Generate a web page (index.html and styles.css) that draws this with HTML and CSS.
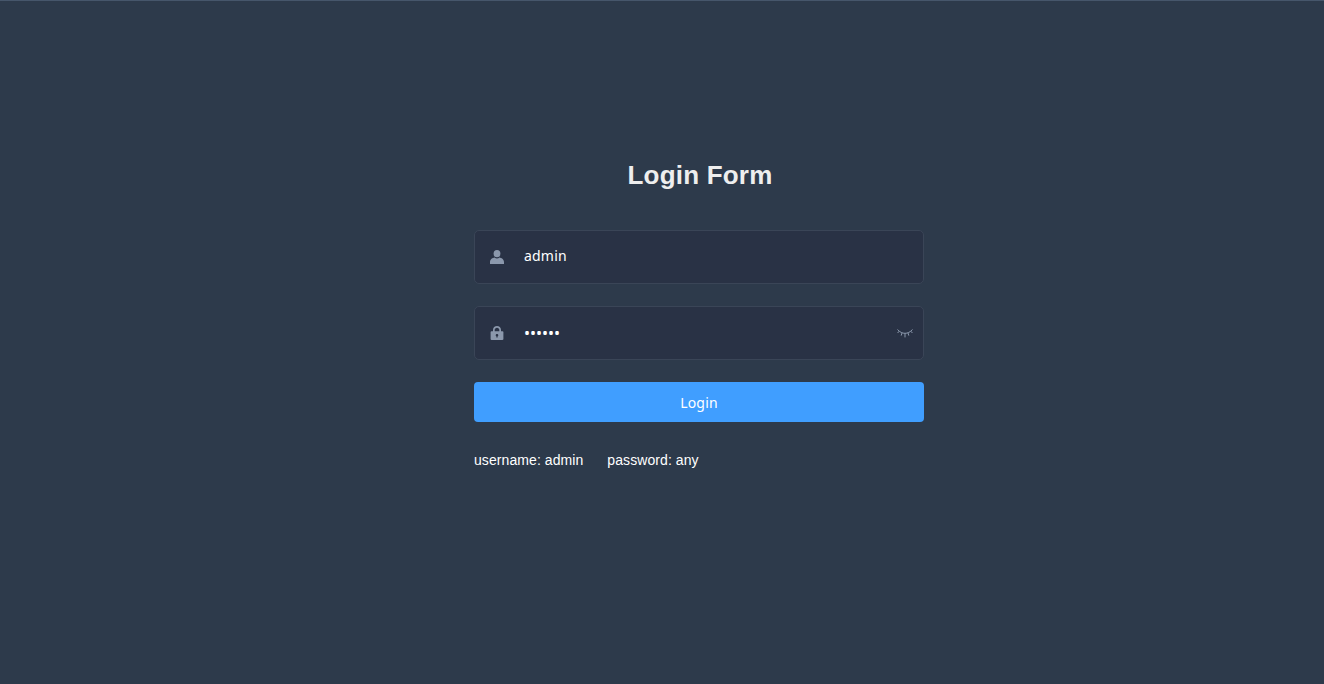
FILE: index.html
```html
<!DOCTYPE html>
<html lang="en">
<head>
    <meta charset="UTF-8">
    <meta name="viewport" content="width=device-width, initial-scale=1.0">
    <title>Login Form</title>
    <link rel="stylesheet" href="styles.css">
</head>
<body>
    <div class="login-container">
        <form class="login-form">
            <h3 class="title">Login Form</h3>

            <div class="form-item">
                <span class="svg-container">
                    <svg class="icon" viewBox="0 0 14 14">
                        <ellipse cx="7" cy="3.6" rx="3.4" ry="3.6" fill="currentColor"/>
                        <path d="M0 14v-1.8C0 9.4 2.6 7.8 4.6 7.6 5.3 8.2 6.1 8.5 7 8.5s1.7-.3 2.4-.9c2 .2 4.6 1.8 4.6 4.6V14z" fill="currentColor"/>
                    </svg>
                </span>
                <input class="form-input form-input-text" type="text" value="admin" aria-label="Username">
            </div>

            <div class="form-item">
                <span class="svg-container">
                    <svg class="icon" viewBox="0 0 14 14">
                        <path fill-rule="evenodd" fill="currentColor" d="M1.5 5.2H3V3.9C3 1.7 4.8 0 7 0s4 1.7 4 3.9v1.3h1.5c.5 0 .9.4.9.9v7c0 .5-.4.9-.9.9h-11c-.5 0-.9-.4-.9-.9v-7c0-.5.4-.9.9-.9zM4.7 5.2h4.6V3.9C9.300 2.700 8.300 1.700 7 1.700S4.700 2.700 4.700 3.900zM7 8c-.7 0-1.300.5-1.300 1.200 0 .5.300.9.700 1.100v1.300h1.200v-1.300c.4-.2.700-.6.700-1.100C8.300 8.500 7.700 8 7 8z"/>
                    </svg>
                </span>
                <input class="form-input form-input-pwd" type="password" value="123456" aria-label="Password">
                <span class="show-pwd">
                    <svg class="eye-icon" viewBox="0 0 16 10">
                        <path d="M.5 1.500C3 4.300 5.400 5.300 8 5.300s5-1 7.500-3.800" fill="none" stroke="currentColor" stroke-width="1"/>
                        <path d="M2.200 3.200.6 5M5 4.900 4.200 7.600M8 5.300V9.400M11 4.900 11.800 7.600M13.800 3.200 15.400 5" fill="none" stroke="currentColor" stroke-width="1"/>
                    </svg>
                </span>
            </div>

            <button class="login-button" type="button">Login</button>

            <div class="tips">
                <span class="tip">username: admin</span>
                <span>password: any</span>
            </div>
        </form>
    </div>
</body>
</html>
```

FILE: styles.css
```css
html, body {
    height: 100%;
    margin: 0;
}

body {
    box-sizing: border-box;
    background-color: #2d3a4b;
    border-top: 1px solid #46566b;
    overflow: hidden;
    font-family: "Liberation Sans", Arial, sans-serif;
}

.login-container {
    display: flex;
    justify-content: center;
    padding-left: 74px;
}

.login-form {
    width: 450px;
    padding-top: 159px;
}

.title {
    font-size: 26px;
    line-height: 30px;
    font-weight: bold;
    letter-spacing: 0.2px;
    color: #eee;
    text-align: center;
    margin: 0 0 40px;
    padding-left: 2px;
}

.form-item {
    display: flex;
    align-items: center;
    position: relative;
    box-sizing: border-box;
    height: 54px;
    margin-bottom: 22px;
    background: #293245;
    border: 1px solid #3a4557;
    border-radius: 5px;
}

.svg-container {
    display: flex;
    flex: none;
    width: 44px;
    padding-left: 15px;
    box-sizing: border-box;
    color: #8b98ac;
}

.icon {
    width: 14px;
    height: 14px;
}

.form-input {
    flex: 1;
    min-width: 0;
    padding: 0 5px;
    border: 0;
    background: transparent;
    color: #fff;
    font-family: "Noto Sans", sans-serif;
    font-size: 14px;
    outline: none;
}

.form-input-text {
    height: 47px;
    padding-bottom: 4px;
    letter-spacing: 0.2px;
}

.form-input-pwd {
    height: 47px;
    font-size: 16px;
}

.show-pwd {
    position: absolute;
    right: 10px;
    top: 21px;
    display: flex;
    color: #8b98ac;
}

.eye-icon {
    width: 16px;
    height: 10px;
}

.login-button {
    display: block;
    width: 100%;
    height: 40px;
    margin-bottom: 30px;
    padding: 0;
    border: 0;
    border-radius: 4px;
    background-color: #409eff;
    color: #fff;
    font-family: "Noto Sans", sans-serif;
    font-size: 14px;
    letter-spacing: 0.2px;
    cursor: pointer;
}

.tips {
    font-size: 14px;
    line-height: 16px;
    letter-spacing: 0.08px;
    color: #fff;
}

.tip {
    margin-right: 20px;
}
```
